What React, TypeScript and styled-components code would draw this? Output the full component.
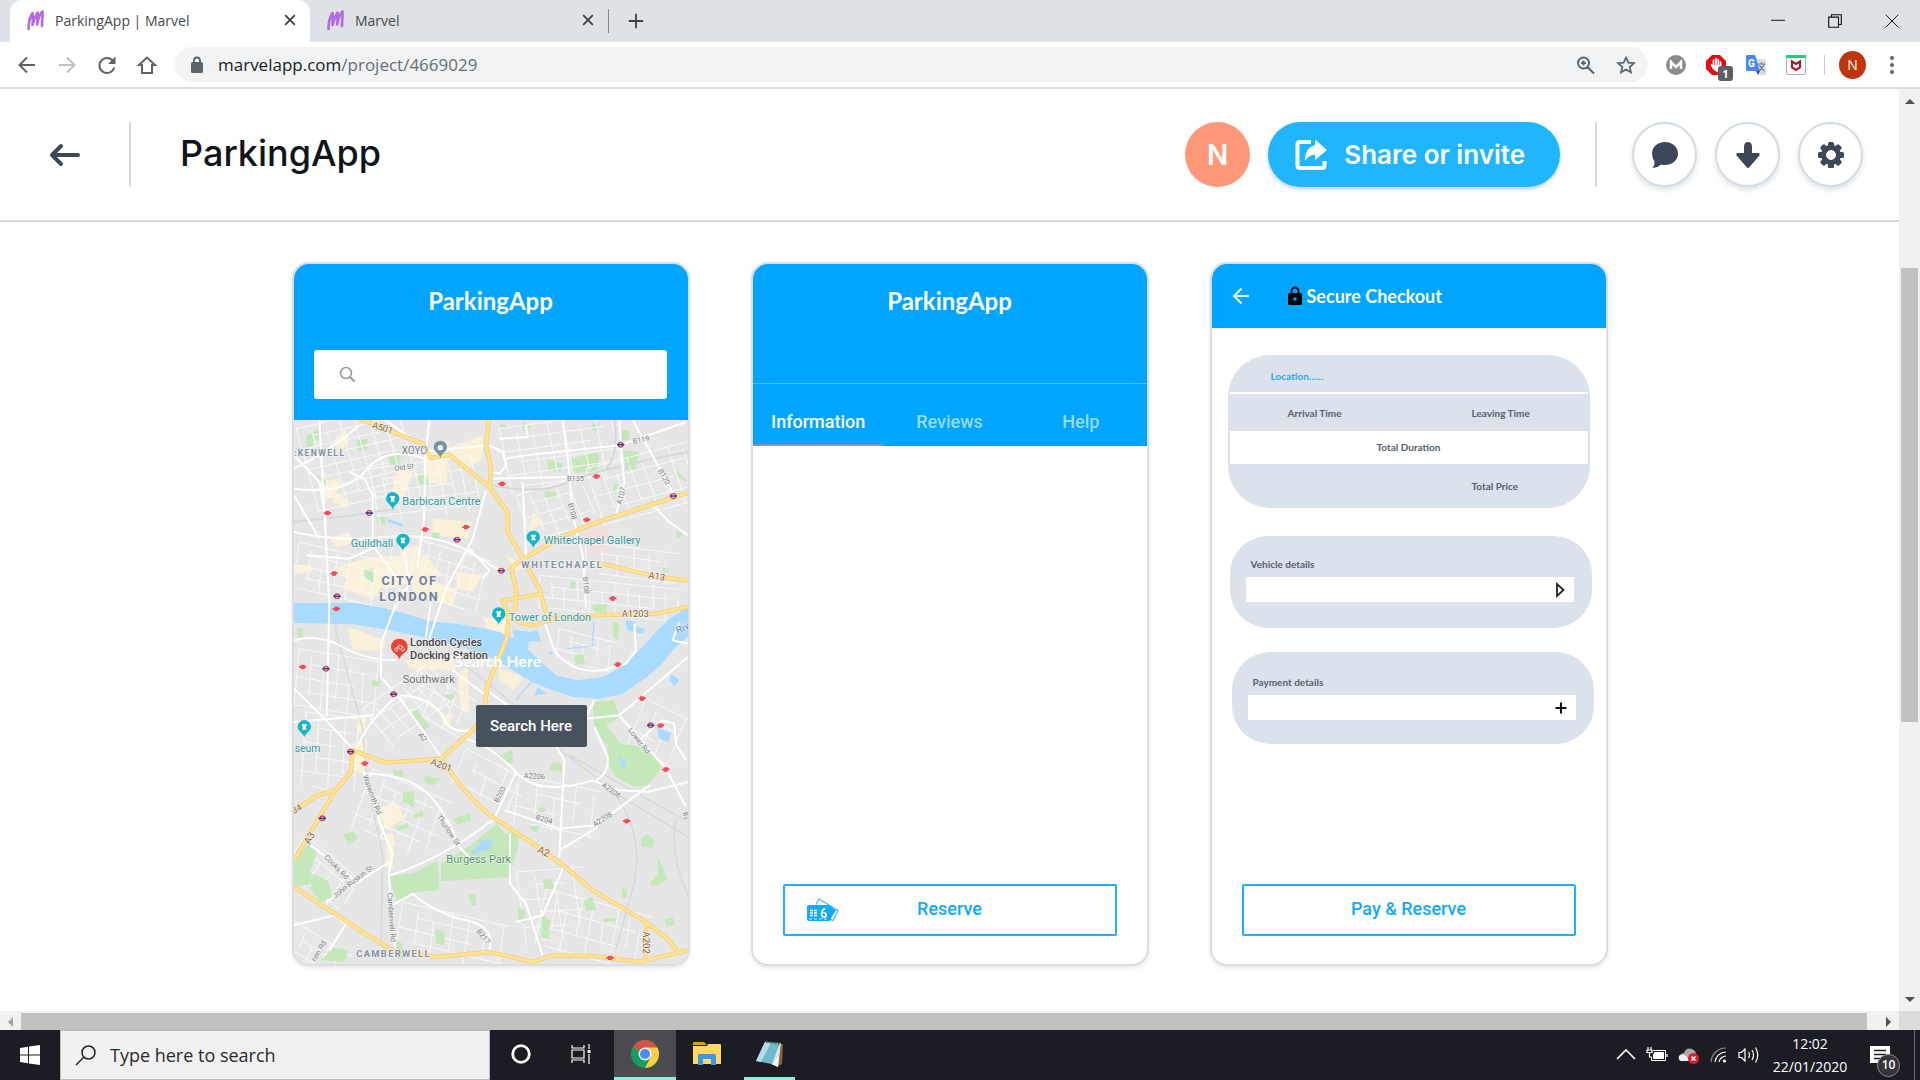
import React, { useState } from "react";
import styled, { createGlobalStyle } from "styled-components";

const uiFont = `"Open Sans", "Noto Sans", sans-serif`;
const roboto = `Roboto, "Liberation Sans", sans-serif`;
const lato = `Lato, "Liberation Sans", sans-serif`;
const inter = `Inter, Roboto, sans-serif`;

const Global = createGlobalStyle`
  *, *::before, *::after { box-sizing: border-box; }
  html, body { margin: 0; height: 100%; overflow: hidden; background: #fff; }
  button { border: 0; padding: 0; margin: 0; background: none; font: inherit; color: inherit; cursor: pointer; }
  input { border: 0; padding: 0; margin: 0; outline: 0; font: inherit; min-width: 0; }
  svg { display: block; flex: none; }
`;

const Desktop = styled.div`
  height: 100vh;
  display: flex;
  flex-direction: column;
  font-family: ${uiFont};
`;

/* ---------- browser ---------- */

const TabStrip = styled.div`
  height: 42px;
  flex: none;
  display: flex;
  align-items: center;
  padding-left: 10px;
  background: #dee1e6;
`;

const Tab = styled.div<{ $active?: boolean }>`
  height: 42px;
  width: ${(p) => (p.$active ? 300 : 298)}px;
  display: flex;
  align-items: center;
  padding: 0 14px 2px 16px;
  gap: 10px;
  font-size: 14px;
  color: #45494d;
  background: ${(p) => (p.$active ? "#fff" : "transparent")};
  border-radius: 12px 12px 0 0;
`;

const TabTitle = styled.span`
  flex: 1;
  white-space: nowrap;
`;

const IconButton = styled.button`
  display: flex;
  align-items: center;
  justify-content: center;
`;

const TabDivider = styled.span`
  width: 1px;
  height: 24px;
  margin-right: 18px;
  background: #85888c;
`;

const WindowControls = styled.div`
  margin-left: auto;
  height: 36px;
  display: flex;
`;

const WindowButton = styled(IconButton)`
  width: 57px;
`;

const Toolbar = styled.div`
  height: 47px;
  flex: none;
  display: flex;
  align-items: center;
  padding: 0 25px 0 17px;
  border-bottom: 2px solid #dadce0;
  background: #fff;
`;

const NavGroup = styled.div`
  display: flex;
  gap: 20px;
  margin-right: 18px;
`;

const AddressBar = styled.label`
  flex: 1;
  height: 35px;
  display: flex;
  align-items: center;
  gap: 14px;
  padding: 0 12px 0 15px;
  border-radius: 18px;
  background: #f1f3f4;
  font-size: 17px;
  color: #202124;
`;

const Url = styled.span`
  flex: 1;
  span { color: #6a6e73; }
`;

const StarWrap = styled.span`
  margin-left: 6px;
`;

const Extensions = styled.div`
  display: flex;
  align-items: center;
  gap: 20px;
  margin-left: 18px;
`;

const Extension = styled(IconButton)`
  position: relative;
  width: 20px;
  height: 24px;
`;

const Badge = styled.span`
  position: absolute;
  left: 12px;
  top: 13px;
  width: 15px;
  height: 15px;
  border-radius: 3px;
  background: #5f6062;
  color: #fff;
  font: 700 11px/15px ${uiFont};
`;

const ToolbarDivider = styled.span`
  width: 1px;
  height: 20px;
  margin-left: 18px;
  background: #c8cace;
`;

const Profile = styled.button`
  width: 27px;
  height: 28px;
  margin: 0 23px 0 14px;
  border-radius: 50%;
  background: #bf360c;
  color: #fff;
  font-size: 14px;
`;

/* ---------- page ---------- */

const Viewport = styled.div`
  flex: 1;
  min-height: 0;
  display: grid;
  grid-template-columns: 1fr 21px;
  grid-template-rows: 1fr 19px;
`;

const Page = styled.main`
  overflow: hidden;
  background: #fff;
`;

const VerticalBar = styled.div`
  display: flex;
  flex-direction: column;
  align-items: center;
  background: #f1f1f1;
  padding: 7px 0;
`;

const VerticalThumb = styled.div`
  width: 17px;
  margin: 162px 0 auto;
  height: 50%;
  background: #c1c1c1;
`;

const HorizontalBar = styled.div`
  display: flex;
  align-items: center;
  padding: 2px 6px 0 5px;
  background: #f1f1f1;
`;

const HorizontalThumb = styled.div`
  flex: 1;
  height: 17px;
  margin: 0 16px 0 6px;
  background: #c1c1c1;
`;

const Corner = styled.div`
  background: #dcdcdc;
`;

const Header = styled.header`
  height: 133px;
  display: flex;
  align-items: center;
  padding: 0 36px 0 48px;
  border-bottom: 2px solid #d9d9da;
`;

const HeaderDivider = styled.span`
  width: 2px;
  height: 65px;
  background: #d3dae3;
`;

const BackButton = styled(IconButton)`
  margin-right: 48px;
`;

const Title = styled.h1`
  margin: 0 auto 0 49px;
  padding-bottom: 4px;
  font: 500 36px/44px ${inter};
  color: #0f141b;
`;

const Avatar = styled.span`
  width: 65px;
  height: 65px;
  border-radius: 50%;
  display: grid;
  place-items: center;
  background: #ff9779;
  color: #fff;
  font: 600 28px/32px ${inter};
`;

const ShareButton = styled.button`
  height: 65px;
  margin: 0 35px 0 18px;
  padding: 0 35px 0 27px;
  display: flex;
  align-items: center;
  gap: 16px;
  border-radius: 33px;
  background: #1fb6ff;
  box-shadow: 0 2px 4px rgba(31, 120, 180, 0.35);
  color: #fff;
  font: 600 26px/32px ${inter};
`;

const RoundActions = styled.div`
  display: flex;
  gap: 18px;
  margin-left: 35px;
`;

const RoundButton = styled(IconButton)`
  width: 65px;
  height: 65px;
  border: 2px solid #d3dce6;
  border-radius: 50%;
  box-shadow: 0 3px 5px rgba(60, 72, 88, 0.16);
`;

const Screens = styled.section`
  display: flex;
  justify-content: center;
  gap: 61px;
  padding: 40px 0;
`;

const Screen = styled.article`
  width: 398px;
  height: 704px;
  display: flex;
  flex-direction: column;
  overflow: hidden;
  border: 2px solid #dcdde0;
  border-radius: 17px;
  box-shadow: 0 2px 4px rgba(0, 0, 0, 0.1);
  background: #fff;
`;

const BlueBar = styled.div<{ $height: number }>`
  height: ${(p) => p.$height}px;
  flex: none;
  background: #00a5ff;
  color: #fff;
`;

const ScreenTitle = styled.h2`
  margin: 0;
  padding-top: 21px;
  text-align: center;
  font: 700 24px/32px ${lato};
`;

const SearchField = styled.label`
  height: 49px;
  margin: 33px 21px 0 20px;
  padding: 0 25px;
  display: flex;
  align-items: center;
  gap: 12px;
  border-radius: 3px;
  background: #fff;
  input { flex: 1; font: 16px ${roboto}; }
`;

const MapArea = styled.div`
  position: relative;
  flex: 1;
  min-height: 0;
  background: #e6e6e6;
`;

const GhostLabel = styled.span`
  position: absolute;
  left: 161px;
  top: 229px;
  color: #fff;
  font: 700 16px/24px ${lato};
`;

const SearchHere = styled.button`
  position: absolute;
  left: 182px;
  top: 285px;
  width: 111px;
  height: 42px;
  border-radius: 2px;
  background: #47525e;
  color: #fff;
  font: 500 15px/42px ${roboto};
`;

const Tabs = styled.div`
  display: grid;
  grid-template-columns: repeat(3, 1fr);
  height: 63px;
  margin-top: 66px;
  border-top: 1px solid #4cc0ff;
`;

const TabButton = styled.button<{ $active: boolean }>`
  padding-top: 15px;
  border-bottom: 2px solid ${(p) => (p.$active ? "#7b98b5" : "transparent")};
  color: ${(p) => (p.$active ? "#fff" : "#99dbff")};
  font: 500 18px/24px ${roboto};
`;

const OutlineButton = styled.button`
  height: 52px;
  flex: none;
  margin: auto 30px 28px;
  display: grid;
  grid-template-columns: 54px 1fr 54px;
  align-items: center;
  justify-items: center;
  border: 2px solid #1fb0ff;
  border-radius: 2px;
  color: #13a9ff;
  font: 500 18px/24px ${roboto};
  span { grid-column: 2; padding-bottom: 3px; }
  svg { grid-column: 1; justify-self: end; }
`;

const CheckoutBar = styled(BlueBar)`
  display: flex;
  align-items: center;
  padding-left: 20px;
`;

const CheckoutTitle = styled.h2`
  margin: 0 0 0 4px;
  font: 700 18px/24px ${lato};
`;

const LockWrap = styled.span`
  margin-left: 37px;
`;

const CheckoutBody = styled.div`
  padding: 27px 12px 0 16px;
  display: flex;
  flex-direction: column;
  color: #556070;
  font: 700 10px/16px ${lato};
`;

const Summary = styled.div`
  width: 362px;
  height: 153px;
  overflow: hidden;
  border-radius: 42px;
  background: #dce2ec;
`;

const SummaryRow = styled.div<{ $height: number; $white?: boolean }>`
  height: ${(p) => p.$height}px;
  margin: 0 2px;
  display: grid;
  grid-template-columns: 58px 184px 1fr;
  align-items: center;
  background: ${(p) => (p.$white ? "#fff" : "transparent")};
`;

const Cell = styled.span<{ $column: number }>`
  grid-column: ${(p) => p.$column};
`;

const Centered = styled.span`
  grid-column: 1 / -1;
  padding-bottom: 2px;
  text-align: center;
`;

const LocationText = styled.span`
  grid-column: 1 / -1;
  padding: 4px 0 0 41px;
  color: #1faaf8;
`;

const Rule = styled.div`
  height: 2px;
  margin: 0 2px;
  background: #fff;
`;

const DetailPanel = styled.div<{ $indent: number; $gap: number; $labelTop: number }>`
  width: 362px;
  height: 92px;
  margin: ${(p) => p.$gap}px 0 0 ${(p) => p.$indent}px;
  padding: ${(p) => p.$labelTop}px 18px 0 16px;
  border-radius: 38px;
  background: #dce2ec;
  label { padding-left: 5px; }
`;

const DetailField = styled.div`
  height: 25px;
  margin-top: 5px;
  padding-right: 5px;
  display: flex;
  align-items: center;
  background: #fff;
  input { flex: 1; height: 25px; background: transparent; }
`;

/* ---------- taskbar ---------- */

const Taskbar = styled.footer`
  height: 50px;
  flex: none;
  display: flex;
  align-items: center;
  background: #1c1c24;
  color: #fff;
`;

const StartButton = styled(IconButton)`
  width: 60px;
  height: 50px;
`;

const TaskSearch = styled.label`
  width: 430px;
  height: 50px;
  display: flex;
  align-items: center;
  gap: 14px;
  padding-left: 14px;
  border: 1px solid #bcbcbc;
  background: #f1f1f1;
  input {
    flex: 1;
    background: transparent;
    font: 18px ${uiFont};
    color: #2b2b2b;
  }
  input::placeholder { color: #2b2b2b; opacity: 1; }
`;

const TaskButton = styled(IconButton)<{ $lit?: boolean; $open?: boolean }>`
  width: 62px;
  height: 50px;
  border-bottom: 3px solid ${(p) => (p.$open ? "#8eeddc" : "transparent")};
  background: ${(p) => (p.$lit ? "#4b4b51" : "transparent")};
  background-clip: padding-box;
`;

const OpenTaskButton = styled(TaskButton)`
  width: 51px;
  margin-left: 6px;
`;

const Tray = styled.div`
  margin-left: auto;
  height: 50px;
  display: flex;
  align-items: center;
  gap: 10px;
`;

const Clock = styled.time`
  width: 80px;
  text-align: center;
  font-size: 14px;
  line-height: 23px;
`;

const Notifications = styled(IconButton)`
  position: relative;
  width: 40px;
  height: 50px;
  margin-right: 14px;
`;

const Count = styled.span`
  position: absolute;
  left: 17px;
  top: 24px;
  width: 23px;
  height: 23px;
  border: 1px solid #8b8b91;
  border-radius: 50%;
  background: #34343b;
  font: 600 12px/20px ${uiFont};
`;

const PeekEdge = styled.span`
  align-self: stretch;
  width: 6px;
  border-left: 1px solid #6b6b70;
`;

/* ---------- icons ---------- */

type StrokeProps = { size?: number; color?: string; width?: number; d: string; fill?: string };
const Icon = ({ size = 20, color = "#5f6368", width = 2, d, fill = "none" }: StrokeProps) => (
  <svg width={size} height={size} viewBox="0 0 20 20" fill={fill} stroke={color} strokeWidth={width}>
    <path d={d} />
  </svg>
);

const MarvelLogo = () => (
  <svg width="19" height="22" viewBox="0 0 19 22" fill="none" stroke="#b36be2" strokeLinecap="round" strokeLinejoin="round">
    <path strokeWidth="2.600" d="M2.500 20 C2.500 14 4 8 6.500 4 C7.200 8 6.800 12 6.500 16 C8 11 9.500 7 11.500 3.500 C12 8 11.300 12 11.200 15.500 C12 10 14 5 16.500 2.500 C17 8 15.800 12 16 17" />
  </svg>
);

const CloseGlyph = () => <Icon size={12} color="#3c4043" width={3} d="M2 2 L18 18 M18 2 L2 18" />;

const Triangle = ({ dir, color = "#505050" }: { dir: "up" | "down" | "left" | "right"; color?: string }) => {
  const d = { up: "M0 8 L5 3 L10 8Z", down: "M0 3 L5 8 L10 3Z", left: "M8 0 L3 5 L8 10Z", right: "M3 0 L8 5 L3 10Z" }[dir];
  return (
    <svg width="10" height="10" viewBox="0 0 10 10" fill={color}>
      <path d={d} />
    </svg>
  );
};

const ChromeLogo = () => (
  <svg width="28" height="28" viewBox="0 0 28 28">
    <circle cx="14" cy="14" r="14" fill="#169f5c" />
    <path d="M14 14 L1.900 7 A14 14 0 0 1 26.100 7 Z" fill="#dd4f43" />
    <path d="M14 7.500 H26.400 A14 14 0 0 1 14 28 L19.600 17.200 Z" fill="#ffce44" />
    <circle cx="14" cy="14" r="6.500" fill="#f1f1f1" />
    <circle cx="14" cy="14" r="5" fill="#4b8af4" />
  </svg>
);

const FolderIcon = () => (
  <svg width="28" height="24" viewBox="0 0 28 24">
    <path d="M0 1 Q0 0 1 0 H11 L14 3 H0Z" fill="#e09f0b" />
    <path d="M0 4 H14 L15 2 H27 Q28 2 28 3 V22 H0Z" fill="#ffd667" />
    <path d="M5 23 V13.500 Q5 12 6.500 12 H21.500 Q23 12 23 13.500 V23 H18 V17 H10 V23Z" fill="#3f98dd" />
  </svg>
);

const NotepadIcon = () => (
  <svg width="28" height="28" viewBox="0 0 28 28">
    <path d="M23 4 L27 4 L26 24 L22 26Z" fill="#8b6430" />
    <path d="M25 3 L22 27 L15 24 L20 4Z" fill="#d9e5ea" />
    <path d="M9 2 L24 3 L16 24 L0 21Z" fill="#6fb9cb" />
    <path d="M9 2 L15 3 L5 22 L0 21Z" fill="#b4dde3" />
    <path d="M10 2 L24 4" stroke="#5c6a70" strokeWidth="2" strokeDasharray="1.500 1.500" />
    <path d="M16 24 L22 27 L23 16Z" fill="#f2f6f7" />
  </svg>
);

const GearIcon = () => (
  <svg width="28" height="28" viewBox="0 0 28 28" fill="#3c4858">
    {[0, 45, 90, 135, 180, 225, 270, 315].map((a) => (
      <rect key={a} x="11" y="1" width="6" height="8" rx="1.500" transform={`rotate(${a} 14 14)`} />
    ))}
    <path fillRule="evenodd" d="M14 4 a10 10 0 1 0 0.010 0Z M14 9 a5 5 0 1 1 -0.010 0Z" />
  </svg>
);

const CardsIcon = () => (
  <svg width="32" height="24" viewBox="0 0 32 24" fill="none">
    <path d="M9 6.500 L12 1 L31 12.500 L26 22.500 L23 21" stroke="#3cb8ff" strokeWidth="1.200" strokeLinejoin="round" />
    <path d="M23 8 L29 12.500 L24 20Z" fill="#13a9ff" />
    <rect x="0" y="7" width="24" height="16" rx="2" fill="#13a9ff" />
    <path d="M3 12.500 H10 M3 15 H10 M3 17.500 H10" stroke="#fff" strokeWidth="1.300" strokeDasharray="3 1" />
    <path d="M18 10.500 C14.500 12 13 19 17 19 C20 19 20 14.500 16.500 15" stroke="#fff" strokeWidth="1.800" />
    <path d="M2 21 H22" stroke="#fff" strokeWidth="0.800" strokeDasharray="3 2" />
  </svg>
);

/* ---------- map ---------- */

type GridProps = { x: number; y: number; a: number; w: number; h: number; sx: number; sy: number };
const districts: GridProps[] = [
  { x: 30, y: 520, a: -14, w: 330, h: 260, sx: 44, sy: 32 },
  { x: 250, y: 640, a: -8, w: 310, h: 170, sx: 34, sy: 36 },
  { x: 640, y: 520, a: -9, w: 360, h: 200, sx: 48, sy: 36 },
  { x: 900, y: 640, a: -16, w: 330, h: 180, sx: 42, sy: 44 },
  { x: 40, y: 860, a: 12, w: 330, h: 140, sx: 40, sy: 34 },
  { x: 330, y: 830, a: 16, w: 300, h: 160, sx: 36, sy: 40 },
  { x: 760, y: 960, a: 5, w: 430, h: 100, sx: 38, sy: 32 },
  { x: 690, y: 720, a: -18, w: 200, h: 160, sx: 40, sy: 36 },
  { x: 900, y: 860, a: 6, w: 280, h: 90, sx: 48, sy: 30 },
  { x: 40, y: 1180, a: 8, w: 260, h: 180, sx: 40, sy: 42 },
  { x: 230, y: 1360, a: -36, w: 240, h: 150, sx: 34, sy: 44 },
  { x: 400, y: 1240, a: 28, w: 200, h: 130, sx: 34, sy: 40 },
  { x: 260, y: 1540, a: 22, w: 260, h: 200, sx: 46, sy: 36 },
  { x: 540, y: 1480, a: 26, w: 260, h: 110, sx: 46, sy: 50 },
  { x: 60, y: 1740, a: 38, w: 220, h: 130, sx: 42, sy: 36 },
  { x: 60, y: 1370, a: 6, w: 180, h: 220, sx: 40, sy: 44 },
  { x: 350, y: 1940, a: 12, w: 330, h: 150, sx: 52, sy: 38 },
  { x: 780, y: 1900, a: 14, w: 330, h: 170, sx: 38, sy: 56 },
  { x: 700, y: 1560, a: 10, w: 250, h: 150, sx: 58, sy: 46 },
  { x: 30, y: 2000, a: 30, w: 200, h: 100, sx: 40, sy: 38 },
  { x: 820, y: 1120, a: 12, w: 180, h: 90, sx: 40, sy: 30 },
  { x: 690, y: 1850, a: -6, w: 200, h: 220, sx: 56, sy: 42 },
  { x: 1080, y: 1330, a: 24, w: 160, h: 200, sx: 44, sy: 50 },
];

const districtPath = ({ w, h, sx, sy }: GridProps) => {
  const parts: string[] = [];
  for (let i = 0, x = 0; x <= w; i++, x += sx) parts.push(`M${x} ${(i % 3) * sy * 0.5}L${x + 8} ${h - (i % 2) * sy}`);
  for (let i = 0, y = 0; y <= h; i++, y += sy) parts.push(`M${(i % 2) * sx} ${y}L${w - (i % 3) * sx} ${y + 6}`);
  return parts.join("");
};

const parks = [
  "M62 540 L108 515 L108 548 L80 560 L85 575 L60 575Z", "M212 555 L243 550 L243 583 L216 587Z", "M392 655 L428 658 L430 688 L395 685Z",
  "M850 610 L940 590 L935 645 L860 655Z", "M1012 585 L1060 590 L1050 640 L1018 645Z", "M1172 645 L1206 680 L1175 668Z", "M784 615 L832 625 L825 650 L786 645Z",
  "M708 500 L735 510 L725 530 L710 525Z", "M918 502 L940 505 L935 530 L916 525Z", "M775 706 L815 712 L810 728 L778 725Z", "M270 780 L300 788 L295 808 L272 803Z",
  "M234 940 L262 940 L262 985 L236 965Z", "M1007 525 L1030 525 L1030 555 L1007 553Z", "M983 685 L995 688 L990 715 L980 712Z", "M918 1050 L965 1043 L962 1074 L925 1070Z", "M300 595 L345 600 L340 628 L315 628Z", "M90 660 L124 672 L118 690Z", "M1170 827 L1186 830 L1184 850 L1172 848Z", "M640 510 L656 500 L662 515 L648 526Z",
  "M438 832 L462 832 L460 850 L440 850Z", "M852 980 L870 980 L868 1002 L852 1000Z", "M1130 938 L1148 938 L1146 952 L1130 950Z",
];
const parksSouth = [
  "M920 305 L985 300 L1000 350 L960 375 L1005 430 L1070 440 L1105 470 L1128 500 L1085 556 L1040 558 L990 530 L960 480 L965 440 L925 380Z",
  "M465 790 L560 730 L632 670 L660 700 L700 690 L695 745 L670 830 L465 843Z", "M312 825 L380 820 L455 780 L460 870 L390 875 L335 905 L318 860Z",
  "M24 780 L65 735 L92 755 L75 810 L80 850 L24 860Z", "M80 820 L125 840 L140 890 L105 905 L75 870Z", "M105 1080 L145 1040 L186 1050 L175 1085Z",
  "M375 335 L395 328 L430 380 L415 388Z", "M636 470 L680 445 L680 485 L655 490Z", "M350 575 L385 572 L385 620 L352 605Z", "M500 655 L555 637 L555 660 L515 675Z",
  "M170 700 L205 695 L215 712 L190 735Z", "M1115 770 L1145 835 L1110 858 L1090 850 L1115 820Z", "M1065 712 L1085 702 L1106 722 L1098 742 L1068 740Z", "M893 900 L920 890 L930 930 L900 932Z", "M770 840 L795 835 L808 868 L775 865Z",
  "M412 525 L465 535 L440 556 L418 548Z", "M865 165 L895 162 L895 195 L868 190Z", "M980 65 L998 68 L998 118 L982 112Z", "M447 985 L475 995 L475 1033 L450 1030Z", "M768 945 L792 960 L788 1015 L766 1010Z", "M695 920 L718 930 L718 970 L697 960Z", "M470 285 L510 278 L495 303Z", "M30 85 L50 82 L52 115 L38 112Z", "M258 240 L283 242 L280 258 L260 258Z", "M730 680 L760 675 L756 695 L738 692Z", "M330 680 L366 668 L366 684 L335 692Z", "M950 955 L990 952 L990 963 L952 964Z", "M800 485 L825 488 L830 515 L790 510Z", "M1135 955 L1160 950 L1165 975 L1140 978Z", "M330 1025 L345 1025 L355 1075 L330 1075Z",
  "M320 508 L350 510 L356 530 L325 528Z", "M385 640 L412 630 L412 648 L385 654Z", "M755 622 L778 620 L776 636 L756 634Z", "M1008 866 L1024 864 L1022 892 L1008 892Z", "M546 885 L566 880 L572 915 L556 915Z",
];
const built = [
  "M330 650 L385 640 L350 735 L320 725Z", "M490 575 L590 540 L590 610 L540 640 L495 600Z", "M440 790 L560 800 L545 850 L440 840Z", "M260 905 L420 900 L470 960 L300 1000 L120 950 L180 925Z",
  "M100 680 L160 670 L160 700 L120 740Z", "M380 960 L510 1000 L500 1050 L380 1020Z", "M410 610 L450 560 L490 560 L480 690 L420 680Z", "M140 560 L180 520 L190 560 L160 590Z", "M660 900 L720 930 L690 950Z", "M130 850 L190 830 L200 865 L150 875Z", "M510 950 L590 960 L560 1010 L515 1000Z", "M740 770 L770 800 L730 830Z",
  "M190 940 L290 990 L260 1030 L170 1000Z", "M340 880 L400 870 L410 930 L350 930Z", "M24 930 L80 930 L80 950 L24 955Z", "M135 700 L190 740 L180 760 L140 740Z",
];
const builtSouth = [
  "M270 625 L330 605 L355 650 L305 690Z", "M590 50 L665 60 L660 120 L610 100Z", "M185 80 L300 120 L290 150 L200 150Z", "M640 205 L710 230 L680 270 L640 235Z", "M515 220 L545 200 L550 340 L525 330Z", "M360 180 L500 165 L510 210 L370 205Z", "M195 430 L245 420 L235 520 L200 510Z", "M300 700 L325 700 L320 810 L300 800Z", "M470 345 L500 340 L490 390 L470 370Z", "M220 350 L240 350 L235 395 L215 400Z",
];
const white = [
  "M24 640 Q130 590 220 510", "M24 830 Q150 860 300 845 T560 895 L640 945", "M100 494 L130 1045", "M190 650 L235 670 L260 720 V870", "M24 700 Q180 720 240 645 T420 610", "M430 494 L418 600 L415 780 L395 930",
  "M395 590 Q520 580 600 570", "M600 705 L560 850 L480 1000 L430 1150", "M615 670 L840 665", "M660 610 L720 600 L1000 570 L1200 500", "M710 680 L720 900", "M1000 494 L1005 580 L1015 680 L990 780", "M830 494 L850 650 L860 780 L890 900 L900 1060",
  "M1040 494 L1110 620 L1165 720", "M1100 750 L1150 800 L1206 840", "M610 570 L650 590 L660 630 L640 655 L612 650", "M24 720 L100 850", "M300 494 L360 540", "M24 600 L100 680 L120 800", "M350 850 L370 990 L330 1035", "M720 510 L725 545 L640 550", "M550 880 L610 945 L590 970", "M260 870 L340 980", "M60 900 L190 910 L280 870",
];
const whiteSouth = [
  "M24 120 Q100 100 170 140 T330 180", "M130 0 L122 350", "M330 10 L285 130 V230 L320 270", "M435 0 L420 110", "M24 265 L120 360 L200 445", "M24 365 L260 345", "M340 290 L465 470", "M340 285 Q440 290 470 350 T570 385", "M330 290 Q240 370 215 440", "M540 415 Q620 440 690 515 T920 540 L1000 570 L1085 575 L1206 545",
  "M690 515 L625 655", "M625 655 Q480 770 310 826", "M655 630 L820 685 L930 675 L1090 555", "M812 440 L835 480 L820 770", "M835 795 L770 945 L690 965", "M232 510 L290 690 L320 760 L308 820 L330 1070", "M235 520 Q360 520 420 575 T520 740 L560 780", "M75 735 L220 850 M120 905 L310 785", "M310 920 L380 880 Q450 940 540 960 T610 1050", "M672 700 V850 L720 910 L770 1065", "M900 355 L1000 345 L1140 505 L1200 620", "M925 300 L900 350", "M1000 345 L1206 170", "M1065 415 L1130 360 L1165 370 L1170 430 L1200 480", "M820 750 L935 680", "M24 975 L145 945 L180 970 L130 1050", "M1206 130 L1160 120 L1180 65", "M770 50 L805 150 Q860 225 960 208 L1020 190 L1050 150 L1045 70", "M925 380 L965 470 Q970 520 930 540", "M610 275 L700 340 L760 400", "M500 210 L600 285",
];
const yellow = [
  "M220 490 Q320 530 410 565 L435 608 L490 598 L610 695 L665 770 V830 L710 910 L760 1000 L790 1105", "M608 494 L600 580 Q622 630 610 695", "M710 912 L800 860 Q850 830 960 792 L1206 712", "M945 925 L1120 965 L1206 975", "M712 912 L675 938 L690 1000 V1040 Q690 1075 668 1080 L650 1035 L770 1015", "M670 1085 Q740 1130 790 1090 L920 1080 L1110 1075 L1206 1055",
  "M670 1070 L662 1150 L605 1290 L592 1380 L565 1420 L465 1510 L300 1522 L200 1485 L195 1550 L145 1610 L24 1815", "M145 1605 L95 1620 L24 1665", "M465 1510 Q560 1650 635 1695 L770 1785 L850 1845 L920 1905 L1080 2000 L1145 2050 L1180 2095", "M24 1895 L230 2030 L320 2085 L450 2105 L610 2090 L740 2120 L800 2100 L920 2102 L1060 2120 L1206 2085", "M1080 2000 V2118",
];
const labels: { t: string; x: number; y: number; s: number; c?: string; r?: number; w?: number; sp?: number; a?: "middle" }[] = [
  { t: "A501", x: 257, y: 517, s: 27, c: "#8a6134", r: 17 }, { t: ":KENWELL", x: 24, y: 602, s: 26, c: "#8290a5", w: 700, sp: 4 }, { t: "XOYO", x: 347, y: 597, s: 30, c: "#6f8795" },
  { t: "Old St", x: 326, y: 647, s: 22, r: -8 }, { t: "Barbican Centre", x: 349, y: 749, s: 33, c: "#2f9ba3" }, { t: "Guildhall", x: 194, y: 876, s: 33, c: "#2f9ba3" },
  { t: "Whitechapel Gallery", x: 773, y: 867, s: 33, c: "#2f9ba3" }, { t: "WHITECHAPEL", x: 706, y: 937, s: 28, c: "#8290a5", w: 700, sp: 5 },
  { t: "CITY OF", x: 370, y: 990, s: 38, c: "#718096", w: 700, sp: 4, a: "middle" }, { t: "LONDON", x: 370, y: 1036, s: 38, c: "#718096", w: 700, sp: 5, a: "middle" },
  { t: "B119", x: 1042, y: 566, s: 22, r: -12 }, { t: "B135", x: 843, y: 676, s: 22 }, { t: "B120", x: 1115, y: 646, s: 22, r: 60 }, { t: "A107", x: 1006, y: 748, s: 22, r: -75 }, { t: "B108", x: 845, y: 745, s: 22, r: 75 }, { t: "B108", x: 890, y: 966, s: 22, r: 84 }, { t: "A13", x: 1086, y: 968, s: 28, c: "#8a6134", r: 10 },
  { t: "Tower of London", x: 668, y: 1096, s: 33, c: "#2f9ba3" }, { t: "A1203", x: 1007, y: 1086, s: 28, c: "#8a6134" }, { t: "Riv", x: 1175, y: 1136, s: 30, c: "#5a8fc4", r: -25 },
  { t: "London Cycles", x: 372, y: 1173, s: 33, c: "#454545", w: 500 }, { t: "Docking Station", x: 372, y: 1210, s: 33, c: "#454545", w: 500 }, { t: "Southwark", x: 350, y: 1283, s: 33, c: "#6b7177" },
  { t: "seum", x: 26, y: 1489, s: 31, c: "#2f9ba3" }, { t: "A2", x: 396, y: 1438, s: 22, r: 55 }, { t: "A201", x: 432, y: 1527, s: 28, c: "#8a6134", r: 20 }, { t: "A2206", x: 713, y: 1568, s: 22, r: 3 }, { t: "A2206", x: 946, y: 1592, s: 22, r: 36 }, { t: "A2208", x: 926, y: 1715, s: 22, r: -32 }, { t: "B203", x: 637, y: 1643, s: 22, r: -64 }, { t: "B204", x: 748, y: 1692, s: 22, r: 16 },
  { t: "Lower Rd", x: 1025, y: 1425, s: 22, r: 52 }, { t: "Walworth Rd", x: 230, y: 1562, s: 22, r: 70 }, { t: "Thurlow St", x: 452, y: 1685, s: 22, r: 56 }, { t: "A2", x: 752, y: 1790, s: 30, c: "#8a6134", r: 25 }, { t: "Burgess Park", x: 481, y: 1824, s: 33, c: "#4b9a60" }, { t: "A3", x: 70, y: 1768, s: 29, c: "#8a6134", r: -60 }, { t: "34", x: 24, y: 1676, s: 26, c: "#8a6134", r: -30 },
  { t: "Cooks Rd", x: 113, y: 1807, s: 22, r: 45 }, { t: "John Ruskin St", x: 147, y: 1930, s: 22, r: -38 }, { t: "Camberwell Rd", x: 304, y: 1913, s: 22, r: 86 }, { t: "B217", x: 570, y: 2029, s: 22, r: 50 }, { t: "A202", x: 1072, y: 2028, s: 29, c: "#8a6134", r: 90 }, { t: "CAMBERWELL", x: 211, y: 2106, s: 28, c: "#8290a5", w: 700, sp: 4 }, { t: "nen Rd", x: 88, y: 2120, s: 22, r: -60 }, { t: "B2", x: 1190, y: 1672, s: 20, r: 75 },
];
const rail = [[124, 773], [417, 822], [540, 815], [648, 685], [931, 663], [902, 793], [144, 954], [980, 1029], [151, 1060], [50, 1234], [995, 1227], [1068, 1329], [1123, 1410], [1139, 1542], [236, 1524], [1022, 1697], [972, 2107]];
const tube = [[1004, 568], [1162, 722], [250, 773], [513, 853], [646, 946], [153, 1023], [120, 1240], [323, 1317], [194, 1489], [1094, 1410], [109, 1689]];
const pins: [number, number, string, number][] = [[463, 608, "#7394aa", 20], [320, 762, "#12b5cb", 20], [351, 887, "#12b5cb", 20], [742, 878, "#12b5cb", 20], [638, 1108, "#12b5cb", 20], [55, 1446, "#12b5cb", 20], [340, 1212, "#ea4335", 25]];

const LondonMap = () => (
  <svg width="100%" height="100%" viewBox="24 494 1182 1632" preserveAspectRatio="xMidYMin slice" role="img" aria-label="Map of central London">
    <rect x="0" y="480" width="1240" height="1680" fill="#e6e6e6" />
    <g fill="#fbf1d8">
      {built.map((d) => <path key={d} d={d} />)}
      <g transform="translate(0 1035)">{builtSouth.map((d) => <path key={d} d={d} />)}</g>
    </g>
    <path d="M880 835 L960 810 L975 885 L915 900Z" fill="#f3dede" />
    <g fill="#c5e8ba">
      {parks.map((d) => <path key={d} d={d} />)}
    </g>
    <g fill="none" stroke="#f8f8f8" strokeWidth="3">
      {districts.map((g) => (
        <path key={`${g.x}-${g.y}`} d={districtPath(g)} transform={`translate(${g.x} ${g.y}) rotate(${g.a})`} />
      ))}
    </g>
    <g fill="#c5e8ba" transform="translate(0 1035)">
      {parksSouth.map((d) => <path key={d} d={d} />)}
    </g>
    <g fill="none" stroke="#d5d7d9" strokeWidth="6">
      <path d="M24 800 L200 780 L330 760 M620 690 Q760 720 850 680 T1206 590 M985 494 Q1000 600 960 640" />
      <path d="M145 1045 L150 1130 L230 1420 L240 1560 L290 1800 L285 2060 M500 1200 L700 1360 L830 1490 L1000 1620 L1206 1745 M850 1500 L1206 1700 M990 1620 Q1080 1750 1040 1900 L990 2080 M1170 1690 Q1150 1800 1206 1920" strokeWidth="4" />
    </g>
    <g transform="translate(0 1035)" fill="#a9daff">
      <path d="M24 8 L210 8 L290 22 L350 38 L430 62 L520 72 L600 85 L640 95 L690 118 L735 155 L770 190 L810 225 L870 240 L950 230 L1010 198 L1060 150 L1115 90 L1150 55 L1206 20 V108 L1160 150 L1125 195 L1075 235 L1010 280 L940 295 L860 290 L790 266 L740 246 L640 185 L590 160 L520 138 L420 112 L300 88 L200 72 L24 68Z" />
      <path d="M680 88 L735 95 L755 90 L765 125 L730 122 L720 155 L685 118Z M1020 60 L1050 65 L1045 78 L1078 85 L1070 100 L1022 90Z M1155 220 L1182 240 L1165 258 L1150 240Z M1112 380 L1155 398 L1148 425 L1120 415Z M997 468 L1022 485 L1010 508Z M550 765 L590 720 L622 720 L612 745Z M755 262 L745 285 L785 280Z M785 158 L800 155 L800 165Z" />
      <path d="M845 145 L910 138 M918 140 L925 65 M740 240 L690 298" fill="none" stroke="#a9daff" strokeWidth="4" />
    </g>
    <path d="M305 795 L350 810" stroke="#a9daff" strokeWidth="8" />
    <g fill="none" stroke="#fff" strokeWidth="6" strokeLinejoin="round">
      {white.map((d) => <path key={d} d={d} />)}
      <g transform="translate(0 1035)">{whiteSouth.map((d) => <path key={d} d={d} />)}</g>
    </g>
    <g fill="none" strokeLinejoin="round">
      <g stroke="#f2cd6b" strokeWidth="13">{yellow.map((d) => <path key={d} d={d} />)}</g>
      <g stroke="#ffe294" strokeWidth="9">{yellow.map((d) => <path key={d} d={d} />)}</g>
    </g>
    {rail.map(([x, y]) => (
      <path key={`${x}-${y}`} d={`M${x - 11} ${y - 2}h5v-4h12v3h5v6h-5v4h-12v-4h-5Z`} fill="#f34a55" />
    ))}
    {tube.map(([x, y]) => (
      <g key={`${x}-${y}`}>
        <circle cx={x} cy={y} r="7" fill="#fff" stroke="#dc4155" strokeWidth="4" />
        <path d={`M${x - 11} ${y}h22`} stroke="#304091" strokeWidth="5" />
      </g>
    ))}
    {pins.map(([x, y, c, r]) => (
      <g key={`${x}-${y}`} transform={`translate(${x} ${y - r - 10})`}>
        <path d={`M${-r} 0 A${r} ${r} 0 1 1 ${r} 0 C${r} ${r * 0.7} 4 ${r * 0.8} 0 ${r + 12} C-4 ${r * 0.8} ${-r} ${r * 0.7} ${-r} 0Z`} transform="translate(0 -2)" fill={c} />
        {c === "#ea4335" ? (
          <path d="M-9 0 a5 5 0 1 0 0.100 0 M10 0 a5 5 0 1 0 0.100 0 M-9 5 L-4 -4 L2 4 M-4 -4 L2 -9 L7 -3 L11 -3" fill="none" stroke="#fff" strokeWidth="2.500" />
        ) : c === "#7394aa" ? (
          <circle r="8" fill="#fff" cy="-1" />
        ) : (
          <path d="M-7 -10 H7 V-5 L4 -2 L7 7 H-7 L-4 -2 L-7 -5Z" fill="#fff" />
        )}
      </g>
    ))}
    <g fontFamily="Roboto, sans-serif" stroke="#f3f3f3" strokeWidth="4" paintOrder="stroke" strokeLinejoin="round">
      {labels.map((l) => (
        <text key={`${l.t}-${l.x}`} transform={`translate(${l.x} ${l.y}) rotate(${l.r ?? 0})`} fontSize={l.s} fill={l.c ?? "#7b8084"} fontWeight={l.w ?? 400} letterSpacing={l.sp} textAnchor={l.a}>
          {l.t}
        </text>
      ))}
    </g>
  </svg>
);

/* ---------- app ---------- */

const Browser = () => (
  <>
    <TabStrip>
      <Tab $active>
        <MarvelLogo />
        <TabTitle>ParkingApp | Marvel</TabTitle>
        <IconButton aria-label="Close tab"><CloseGlyph /></IconButton>
      </Tab>
      <Tab>
        <MarvelLogo />
        <TabTitle>Marvel</TabTitle>
        <IconButton aria-label="Close tab"><CloseGlyph /></IconButton>
      </Tab>
      <TabDivider />
      <IconButton aria-label="New tab"><Icon size={18} color="#3c4043" width={2} d="M10 2 V18 M2 10 H18" /></IconButton>
      <WindowControls>
        <WindowButton aria-label="Minimise"><Icon size={14} color="#111" width={1.4} d="M0 9 H20" /></WindowButton>
        <WindowButton aria-label="Restore"><Icon size={14} color="#111" width={1.6} d="M1 4.500 H15 V19 H1Z M5 4 V1 H19 V15 H15" /></WindowButton>
        <WindowButton aria-label="Close"><Icon size={14} color="#111" width={1.4} d="M1 1 L19 19 M19 1 L1 19" /></WindowButton>
      </WindowControls>
    </TabStrip>
    <Toolbar>
      <NavGroup>
        <IconButton aria-label="Back"><Icon d="M18 10 H3 M10 2.500 L2.500 10 L10 17.500" /></IconButton>
        <IconButton aria-label="Forward"><Icon color="#bdbfc1" d="M2 10 H17 M10 2.500 L17.500 10 L10 17.500" /></IconButton>
        <IconButton aria-label="Reload">
          <svg width="20" height="20" viewBox="0 0 20 20">
            <path d="M16 6 A7.500 7.500 0 1 0 17.200 12.500" fill="none" stroke="#5f6368" strokeWidth="2" />
            <path d="M18.500 1.500 V9 H11Z" fill="#5f6368" />
          </svg>
        </IconButton>
        <IconButton aria-label="Home"><Icon d="M5 10 V18 H15 V10 H18 L10 2.500 L2 10Z" /></IconButton>
      </NavGroup>
      <AddressBar>
        <svg width="14" height="18" viewBox="0 0 14 18">
          <rect x="1" y="6" width="12" height="11" rx="1.500" fill="#5f6368" />
          <path d="M4 7 V4.500 a3 3 0 0 1 6 0 V7" fill="none" stroke="#5f6368" strokeWidth="1.800" />
        </svg>
        <Url>marvelapp.com<span>/project/4669029</span></Url>
        <IconButton aria-label="Zoom">
          <Icon d="M13 8 A5.500 5.500 0 1 1 2 8 A5.500 5.500 0 1 1 13 8 M11.500 12 L18 18.500 M5 8 H10 M7.500 5.500 V10.500" />
        </IconButton>
        <StarWrap>
          <IconButton aria-label="Bookmark">
            <Icon width={1.7} d="M10 2.500 L12.300 7.600 L18 8.200 L13.700 12 L15 17.600 L10 14.600 L5 17.600 L6.300 12 L2 8.200 L7.700 7.600Z" />
          </IconButton>
        </StarWrap>
      </AddressBar>
      <Extensions>
        <Extension aria-label="Mail checker">
          <svg width="20" height="20" viewBox="0 0 20 20">
            <circle cx="10" cy="10" r="10" fill="#8b8b8b" />
            <path d="M5 14 V7 L10 12 L15 7 V14" fill="none" stroke="#fff" strokeWidth="2.500" />
          </svg>
        </Extension>
        <Extension aria-label="Ad blocker">
          <svg width="20" height="20" viewBox="0 0 20 20">
            <path d="M6 0 H14 L20 6 V14 L14 20 H6 L0 14 V6Z" fill="#e60b12" />
            <path d="M7.500 11 V5 M10 10 V3.500 M12.300 10 V4.500 M14.500 11 V7 M5.500 10 L8 14" stroke="#fff" strokeWidth="1.700" strokeLinecap="round" />
            <path d="M6.500 10 H15.300 V13 Q14 17 11 17 Q8 16 6.500 12Z" fill="#fff" />
          </svg>
          <Badge>1</Badge>
        </Extension>
        <Extension aria-label="Translate">
          <svg width="20" height="20" viewBox="0 0 20 20">
            <path d="M9 4 H19 Q20 4 20 5 V19 Q20 20 19 20 H13Z" fill="#dcdedf" />
            <path d="M12 9 H19 M15.500 7 V9 M18 9 Q17 13 13 16 M13.500 10 Q15 14 18.500 16" stroke="#6d8190" fill="none" strokeWidth="1.200" />
            <path d="M0 1 Q0 0 1 0 H9 L14 16 H1 Q0 16 0 15Z" fill="#4a86ee" />
            <path d="M10 16 H14 L12 20Z" fill="#3c3fae" />
            <text x="2" y="11.500" fontFamily="Roboto" fontWeight="700" fontSize="10" fill="#fff">G</text>
          </svg>
        </Extension>
        <Extension aria-label="Web adviser">
          <svg width="20" height="20" viewBox="0 0 20 20">
            <rect x="0.500" y="0.500" width="19" height="19" rx="1.500" fill="#fff" stroke="#a9abad" />
            <path d="M0 0 H20 V3 H0Z" fill="#0ad675" />
            <path d="M6 6.500 L10 9 L14 6.500 V12.500 L10 15 L6 12.500Z" fill="none" stroke="#b8162b" strokeWidth="2.200" />
          </svg>
        </Extension>
      </Extensions>
      <ToolbarDivider />
      <Profile aria-label="Profile">N</Profile>
      <IconButton aria-label="Menu">
        <svg width="6" height="18" viewBox="0 0 6 18" fill="#5f6368"><circle cx="3" cy="2" r="2" /><circle cx="3" cy="9" r="2" /><circle cx="3" cy="16" r="2" /></svg>
      </IconButton>
    </Toolbar>
  </>
);

const ProjectHeader = () => (
  <Header>
    <BackButton aria-label="Back to projects">
      <svg width="33" height="26" viewBox="0 0 33 26" fill="none" stroke="#3c4858" strokeWidth="4" strokeLinecap="round" strokeLinejoin="round">
        <path d="M30 13 H5 M13 4 L4 13 L13 22" />
      </svg>
    </BackButton>
    <HeaderDivider />
    <Title>ParkingApp</Title>
    <Avatar>N</Avatar>
    <ShareButton>
      <svg width="33" height="32" viewBox="0 0 33 32" fill="none">
        <path d="M16 3 H5 Q2.500 3 2.500 5.500 V26.500 Q2.500 29 5 29 H27 Q29.500 29 29.500 26.500 V22" stroke="#fff" strokeWidth="4" />
        <path d="M20 0.500 L32 11 L20 21 V15.500 Q14 15.500 10 22 Q10 8 20 6.500Z" fill="#fff" />
      </svg>
      Share or invite
    </ShareButton>
    <HeaderDivider />
    <RoundActions>
      <RoundButton aria-label="Comments">
        <svg width="28" height="28" viewBox="0 0 28 28" fill="#3c4858">
          <path d="M14 1 C21.500 1 27 6 27 12.500 C27 19 21.500 24 14 24 Q12 24 10 23.500 Q7 26.500 1.500 27 Q4 23.500 3.500 20.500 Q1 17 1 12.500 C1 6 6.500 1 14 1Z" />
        </svg>
      </RoundButton>
      <RoundButton aria-label="Download">
        <svg width="26" height="28" viewBox="0 0 26 28" fill="#3c4858">
          <path d="M9 6 Q9 1 13 1 Q17 1 17 6 V12 H23 Q26 12 24 15 L14.500 26 Q13 28 11.500 26 L2 15 Q0 12 3 12 H9Z" />
        </svg>
      </RoundButton>
      <RoundButton aria-label="Settings"><GearIcon /></RoundButton>
    </RoundActions>
  </Header>
);

const SearchScreen = () => (
  <Screen>
    <BlueBar $height={156}>
      <ScreenTitle>ParkingApp</ScreenTitle>
      <SearchField>
        <svg width="17" height="17" viewBox="0 0 17 17" fill="none" stroke="#999">
          <circle cx="7" cy="7" r="5.500" strokeWidth="1.500" />
          <path d="M11 11 L15.500 15.500" strokeWidth="2" />
        </svg>
        <input aria-label="Search location" />
      </SearchField>
    </BlueBar>
    <MapArea>
      <LondonMap />
      <GhostLabel>Search Here</GhostLabel>
      <SearchHere>Search Here</SearchHere>
    </MapArea>
  </Screen>
);

const tabNames = ["Information", "Reviews", "Help"];

const InfoScreen = () => {
  const [active, setActive] = useState(tabNames[0]);
  return (
    <Screen>
      <BlueBar $height={182}>
        <ScreenTitle>ParkingApp</ScreenTitle>
        <Tabs role="tablist">
          {tabNames.map((name) => (
            <TabButton key={name} role="tab" aria-selected={active === name} $active={active === name} onClick={() => setActive(name)}>
              {name}
            </TabButton>
          ))}
        </Tabs>
      </BlueBar>
      <OutlineButton><CardsIcon /><span>Reserve</span></OutlineButton>
    </Screen>
  );
};

const CheckoutScreen = () => (
  <Screen>
    <CheckoutBar $height={64}>
      <IconButton aria-label="Back">
        <svg width="18" height="18" viewBox="0 0 18 18" fill="none" stroke="#fff" strokeWidth="2"><path d="M17 9 H2 M9.500 1.500 L2 9 L9.500 16.500" /></svg>
      </IconButton>
      <LockWrap>
        <svg width="16" height="20" viewBox="0 0 16 20">
          <path d="M4.500 8 V5 a3.500 3.500 0 0 1 7 0 V8" fill="none" stroke="#000" strokeWidth="1.800" />
          <rect x="1" y="7" width="14" height="12" rx="1.500" fill="#000" />
          <circle cx="8" cy="13" r="1.800" fill="#00a5ff" />
        </svg>
      </LockWrap>
      <CheckoutTitle>Secure Checkout</CheckoutTitle>
    </CheckoutBar>
    <CheckoutBody>
      <Summary>
        <SummaryRow $height={37}><LocationText>Location......</LocationText></SummaryRow>
        <Rule />
        <SummaryRow $height={37}><Cell $column={2}>Arrival Time</Cell><Cell $column={3}>Leaving Time</Cell></SummaryRow>
        <SummaryRow $height={33} $white><Centered>Total Duration</Centered></SummaryRow>
        <SummaryRow $height={44}><Cell $column={3}>Total Price</Cell></SummaryRow>
      </Summary>
      <DetailPanel $indent={2} $gap={28} $labelTop={20}>
        <label htmlFor="vehicle">Vehicle details</label>
        <DetailField>
          <input id="vehicle" />
          <IconButton aria-label="Choose vehicle"><Icon color="#222" width={1.8} d="M8 4 V16 L14.500 10Z" /></IconButton>
        </DetailField>
      </DetailPanel>
      <DetailPanel $indent={4} $gap={24} $labelTop={22}>
        <label htmlFor="payment">Payment details</label>
        <DetailField>
          <input id="payment" />
          <IconButton aria-label="Add payment"><Icon color="#111" d="M10 4.500 V15.500 M4.500 10 H15.500" /></IconButton>
        </DetailField>
      </DetailPanel>
    </CheckoutBody>
    <OutlineButton><span>Pay &amp; Reserve</span></OutlineButton>
  </Screen>
);

const WindowsTaskbar = () => (
  <Taskbar>
    <StartButton aria-label="Start">
      <svg width="20" height="20" viewBox="0 0 20 20" fill="#fff"><path d="M0 3 L8 1.800 V9.500 H0Z M9 1.600 L20 0 V9.500 H9Z M0 10.500 H8 V18.200 L0 17Z M9 10.500 H20 V20 L9 18.400Z" /></svg>
    </StartButton>
    <TaskSearch>
      <svg width="21" height="21" viewBox="0 0 21 21" fill="none" stroke="#222" strokeWidth="1.500"><circle cx="13.500" cy="7.500" r="6.500" /><path d="M9 12 L1 20" /></svg>
      <input aria-label="Search" placeholder="Type here to search" />
    </TaskSearch>
    <TaskButton aria-label="Cortana"><svg width="20" height="20" viewBox="0 0 20 20"><circle cx="10" cy="10" r="8.300" fill="none" stroke="#fff" strokeWidth="2.800" /></svg></TaskButton>
    <TaskButton aria-label="Task view">
      <svg width="24" height="20" viewBox="0 0 24 20" fill="none" stroke="#fff" strokeWidth="1.200"><path d="M1 1 V4 H13 V1 M1 6 H13 V14 H1Z M1 19 V16 H13 V19 M18 0 V5 M18 10 V20" /><path d="M18 6 V9" strokeWidth="3" /></svg>
    </TaskButton>
    <TaskButton aria-label="Chrome" $lit $open><ChromeLogo /></TaskButton>
    <TaskButton aria-label="File Explorer"><FolderIcon /></TaskButton>
    <OpenTaskButton aria-label="Notepad" $open><NotepadIcon /></OpenTaskButton>
    <Tray>
      <Icon color="#fff" width={1.7} d="M1 14 L10 5 L19 14" />
      <svg width="22" height="20" viewBox="0 0 22 20" fill="none" stroke="#fff">
        <path d="M7 5.500 H19.500 V15.500 H5.500 V12" />
        <path d="M8.500 7.500 H17.500 V13.500 H7.500 V10Z" fill="#fff" />
        <path d="M21 9 V12 M2 2 V5 M5 2 V5 M1 5 H6 V7.500 H1Z M3.500 8 V12 H5.500" strokeWidth="1.200" />
      </svg>
      <svg width="22" height="20" viewBox="0 0 22 20"><path d="M3 16 Q0 15 1 11 Q3 8 6 8 Q8 2 14 4 Q19 6 18 12 L12 16Z" fill="#aaa" /><path d="M3 16 Q0 15 1 11 Q5 8 8 11 L12 16Z" fill="#eee" /><circle cx="15.500" cy="13.500" r="5.500" fill="#d8202b" /><path d="M13.500 11.500 L17.500 15.500 M17.500 11.500 L13.500 15.500" stroke="#fff" strokeWidth="1.500" /></svg>
      <svg width="18" height="20" viewBox="0 0 18 20" fill="none" stroke="#fff" strokeWidth="1.200"><path d="M1 17 A15 15 0 0 1 16 3" opacity="0.500" /><path d="M5 17 A11 11 0 0 1 16 7 M9 17 A7 7 0 0 1 16 11" /><circle cx="14.500" cy="16" r="1.600" fill="#fff" stroke="none" /></svg>
      <svg width="22" height="20" viewBox="0 0 22 20" fill="none" stroke="#fff" strokeWidth="1.200"><path d="M1 7.500 H3.500 L7 4 V16 L3.500 12.500 H1Z M10.500 7 Q12.500 10 10.500 13 M14 5 Q17 10 14 15 M17.500 2.500 Q22 10 17.500 17.500" /></svg>
      <Clock>12:02<br />22/01/2020</Clock>
      <Notifications aria-label="Notifications">
        <svg width="20" height="20" viewBox="0 0 20 20"><path d="M0 1 H20 V18 H0Z" fill="#fff" /><path d="M4 5.500 H16 M4 9.500 H16 M4 13.500 H11" stroke="#1c1c24" strokeWidth="1.300" /></svg>
        <Count>10</Count>
      </Notifications>
    </Tray>
    <PeekEdge />
  </Taskbar>
);

export default function App() {
  return (
    <>
      <Global />
      <Desktop>
        <Browser />
        <Viewport>
          <Page>
            <ProjectHeader />
            <Screens>
              <SearchScreen />
              <InfoScreen />
              <CheckoutScreen />
            </Screens>
          </Page>
          <VerticalBar>
            <Triangle dir="up" />
            <VerticalThumb />
            <Triangle dir="down" />
          </VerticalBar>
          <HorizontalBar>
            <Triangle dir="left" color="#a3a3a3" />
            <HorizontalThumb />
            <Triangle dir="right" />
          </HorizontalBar>
          <Corner />
        </Viewport>
        <WindowsTaskbar />
      </Desktop>
    </>
  );
}
